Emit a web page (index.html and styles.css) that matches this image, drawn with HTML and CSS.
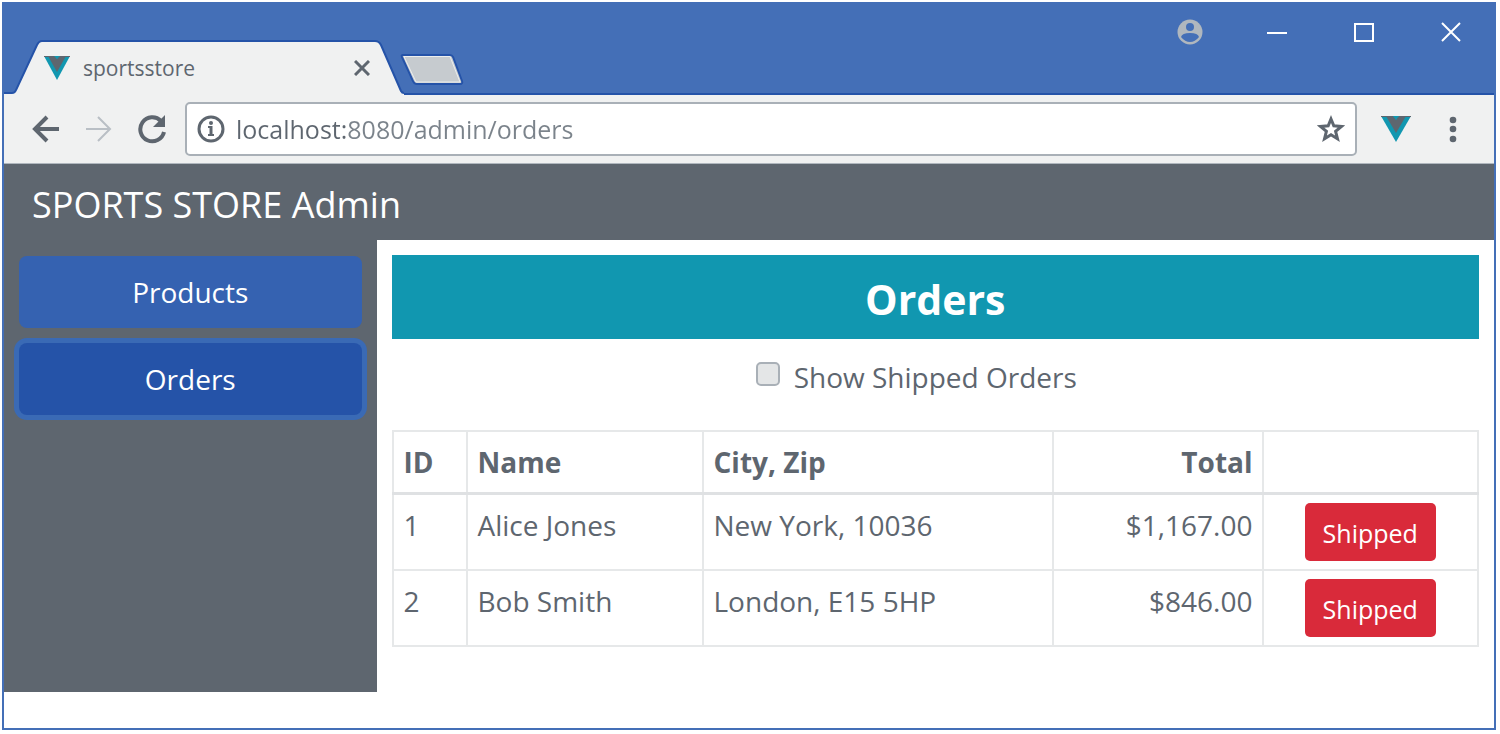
FILE: index.html
```
<!DOCTYPE html>
<html lang="en">
<head>
<meta charset="utf-8">
<title>sportsstore</title>
<link rel="stylesheet" href="styles.css">
</head>
<body>
<div class="window">
  <div class="titlebar">
    <div class="tab">
      <svg class="tab-shape" viewBox="0 0 400 55" preserveAspectRatio="none" aria-hidden="true">
        <path d="M0 55V53H8Q11 53 12 50L33 5Q35 1 38 1H371Q375 1 377 5L397 51Q398 53 400 53V55Z" fill="#f0f1f1"/>
        <path d="M0 53H8Q11 53 12 50L33 5Q35 1 38 1H371Q375 1 377 5L397 51Q398 53 400 53" fill="none" stroke="#2553a8" stroke-width="2"/>
      </svg>
      <svg class="favicon" viewBox="0 0 26 24" aria-hidden="true">
        <path d="M0 0H26L13 24Z" fill="#1197b0"/>
        <path d="M4 0H10L13 4L16 0H22L13 16Z" fill="#5e666f"/>
        <path d="M0 0.500H10L13 4L16 0.500H26" fill="none" stroke="#5e666f"/>
      </svg>
      <span class="tab-title">sportsstore</span>
      <button class="icon-button tab-close" aria-label="Close tab">
        <svg width="16" height="16" viewBox="0 0 16 16"><path d="M1 1L15 15M15 1L1 15" stroke="#5e666f" stroke-width="3"/></svg>
      </button>
    </div>
    <button class="icon-button new-tab" aria-label="New tab">
      <svg width="64" height="34" viewBox="0 0 64 34"><path d="M3 2H50Q52 2 53 4L62 28Q63 31 60 31H17Q14 31 13 28L2 4Q1 2 3 2Z" fill="#c6cbcf" stroke="#2553a8" stroke-width="2"/><path d="M4 3.500H50L60 29H16Z" fill="none" stroke="#eceeee" stroke-width="1"/></svg>
    </button>
    <div class="window-controls">
      <button class="icon-button" aria-label="Profile">
        <svg width="26" height="26" viewBox="0 0 26 26"><circle cx="13" cy="13" r="12.500" fill="#b0b7be"/><circle cx="13" cy="8" r="4" fill="#446fb7"/><path d="M4 18Q5 14 13 14T22 18Q18 23 13 23T4 18Z" fill="#446fb7"/></svg>
      </button>
      <button class="icon-button" aria-label="Minimize">
        <svg width="26" height="26" viewBox="0 0 26 26"><path d="M3 14H23" stroke="#fff" stroke-width="2"/></svg>
      </button>
      <button class="icon-button" aria-label="Maximize">
        <svg width="26" height="26" viewBox="0 0 26 26"><rect x="4" y="5" width="18" height="17" fill="none" stroke="#fff" stroke-width="2"/></svg>
      </button>
      <button class="icon-button" aria-label="Close window">
        <svg width="26" height="26" viewBox="0 0 26 26"><path d="M4 4L22 22M22 4L4 22" stroke="#fff" stroke-width="2"/></svg>
      </button>
    </div>
  </div>

  <div class="toolbar">
    <div class="nav-buttons">
      <button class="icon-button" aria-label="Back">
        <svg width="30" height="30" viewBox="0 0 30 30"><path d="M28 15H4M16 3L4 15L16 27" fill="none" stroke="#5e666f" stroke-width="4"/></svg>
      </button>
      <button class="icon-button" aria-label="Forward">
        <svg width="30" height="30" viewBox="0 0 30 30"><path d="M2 15H26M14 3L26 15L14 27" fill="none" stroke="#b9bfc5" stroke-width="2"/></svg>
      </button>
      <button class="icon-button" aria-label="Reload">
        <svg width="30" height="30" viewBox="0 0 30 30"><path d="M24 7A12 12 0 1 0 27 18" fill="none" stroke="#5e666f" stroke-width="4"/><path d="M28 1V13H16Z" fill="#5e666f"/></svg>
      </button>
    </div>
    <div class="omnibox">
      <svg width="28" height="28" viewBox="0 0 28 28" aria-hidden="true"><circle cx="14" cy="14" r="12" fill="none" stroke="#5e666f" stroke-width="3"/><path d="M11 12H14V20M11 20H17" fill="none" stroke="#5e666f" stroke-width="2"/><path d="M14 11V21" stroke="#5e666f" stroke-width="3"/><circle cx="14" cy="8" r="2" fill="#5e666f"/></svg>
      <input class="address" type="text" aria-label="Address" value="localhost:8080/admin/orders">
      <button class="icon-button" aria-label="Bookmark">
        <svg width="28" height="28" viewBox="0 0 28 28"><path d="M14 4L16.800 10.800L24.500 11.400L18.600 16.300L20.500 23.800L14 19.800L7.500 23.800L9.400 16.300L3.500 11.400L11.200 10.800Z" fill="none" stroke="#5e666f" stroke-width="3"/></svg>
      </button>
    </div>
    <button class="icon-button" aria-label="Vue devtools">
      <svg width="30" height="26" viewBox="0 0 30 26"><path d="M0 0H30L15 26Z" fill="#1197b0"/><path d="M5 0H11L15 5L19 0H25L15 17Z" fill="#5e666f"/><path d="M0 0.500H12L15 5L18 0.500H30" fill="none" stroke="#5e666f"/></svg>
    </button>
    <button class="icon-button menu" aria-label="Menu">
      <svg width="8" height="28" viewBox="0 0 8 28"><g fill="#5e666f"><circle cx="4" cy="5" r="3.300"/><circle cx="4" cy="14" r="3.300"/><circle cx="4" cy="24" r="3.300"/></g></svg>
    </button>
  </div>

  <header class="brand">SPORTS STORE Admin</header>
  <div class="layout">
    <nav class="sidebar">
      <a class="nav-link" href="#products">Products</a>
      <a class="nav-link nav-link-active" href="#orders" aria-current="page">Orders</a>
    </nav>
    <main class="content">
      <h1 class="page-title">Orders</h1>
      <div class="filter">
        <input class="check" type="checkbox" id="show-shipped">
        <label for="show-shipped">Show Shipped Orders</label>
      </div>
      <table class="orders">
        <colgroup><col class="col-id"><col class="col-name"><col class="col-city"><col class="col-total"><col></colgroup>
        <thead>
          <tr><th>ID</th><th>Name</th><th>City, Zip</th><th class="number">Total</th><th></th></tr>
        </thead>
        <tbody>
          <tr><td>1</td><td>Alice Jones</td><td>New York, 10036</td><td class="number">$1,167.00</td><td class="action"><button class="ship">Shipped</button></td></tr>
          <tr><td>2</td><td>Bob Smith</td><td>London, E15 5HP</td><td class="number">$846.00</td><td class="action"><button class="ship">Shipped</button></td></tr>
        </tbody>
      </table>
    </main>
  </div>
</div>
</body>
</html>
```
FILE: styles.css
```
* {
  box-sizing: border-box;
}

body {
  margin: 0;
  min-height: 100vh;
  padding: 2px 4px 4px 2px;
  display: flex;
  background: #fff;
  color: #5e666f;
  font: 28px/40px "Open Sans", "Noto Sans", sans-serif;
}

.window {
  flex: 1;
  border: 2px solid #446fb7;
  border-top: 0;
}

.icon-button {
  display: flex;
  padding: 0;
  border: 0;
  background: none;
}

.titlebar {
  display: flex;
  align-items: flex-end;
  height: 93px;
  background: linear-gradient(#2553a8, #2553a8) bottom / 100% 2px no-repeat #446fb7;
}

.tab {
  position: relative;
  display: flex;
  align-items: center;
  width: 400px;
  height: 55px;
  padding: 0 34px 0 40px;
  font-size: 21px;
}

.tab-shape {
  position: absolute;
  inset: 0;
  width: 100%;
  height: 100%;
}

.favicon {
  position: relative;
  width: 26px;
  height: 24px;
}

.tab-title {
  position: relative;
  flex: 1;
  padding-left: 13px;
}

.tab-close {
  position: relative;
}

.new-tab {
  margin: 0 0 8px -4px;
}

.window-controls {
  display: flex;
  align-self: flex-start;
  gap: 61px;
  margin: 17px 30px 0 auto;
}

.toolbar {
  display: flex;
  align-items: center;
  gap: 24px;
  height: 69px;
  padding: 0 37px 0 27px;
  border-bottom: 1px solid #b0b7be;
  background: #f0f1f1;
}

.nav-buttons {
  display: flex;
  gap: 23px;
  margin-right: -6px;
}

.omnibox {
  flex: 1;
  display: flex;
  align-items: center;
  gap: 11px;
  height: 54px;
  padding: 0 10px;
  border: 2px solid #a9b0b7;
  border-radius: 5px;
  background: #fff;
}

.address {
  flex: 1;
  min-width: 0;
  padding: 0;
  border: 0;
  background: linear-gradient(90deg, #5e666f 111px, #7b838b 111px);
  background-clip: text;
  color: transparent;
  font: inherit;
  font-size: 25px;
}

.menu {
  margin-left: 14px;
}

.brand {
  padding: 21px 28px 15px;
  background: #5e666f;
  color: #fff;
  font-size: 36px;
}

.layout {
  display: flex;
  min-height: 452px;
}

.sidebar {
  display: flex;
  flex-direction: column;
  gap: 15px;
  flex: 0 0 25%;
  padding: 16px 15px;
  background: #5e666f;
}

.nav-link {
  padding: 16px;
  border-radius: 8px;
  background: #3562b1;
  color: #fff;
  text-align: center;
  text-decoration: none;
}

.nav-link-active {
  background: #2553a8;
  box-shadow: 0 0 0 5px #3a6ab5;
}

.content {
  flex: 1;
  padding: 15px;
}

.page-title {
  margin: 0;
  padding: 24px 0 20px;
  background: #1197b0;
  color: #fff;
  font-size: 41px;
  line-height: 40px;
  text-align: center;
}

.filter {
  display: flex;
  justify-content: center;
  align-items: center;
  gap: 14px;
  padding: 18px 38px 33px 0;
}

.check {
  appearance: none;
  width: 24px;
  height: 24px;
  margin: 0 0 6px;
  border: 2px solid #a9b0b7;
  border-radius: 5px;
  background: #e4e6e7;
}

.orders {
  width: 100%;
  border-collapse: collapse;
  table-layout: fixed;
}

.orders th,
.orders td {
  padding: 10px;
  border: 2px solid #e6e8e9;
  text-align: left;
  vertical-align: top;
}

.orders th {
  border-bottom: 3px solid #dfe1e3;
}

.orders .number {
  padding-right: 9px;
  text-align: right;
}

.orders .action {
  padding: 8px;
  text-align: center;
}

.ship {
  display: block;
  margin: 0 auto;
  padding: 10px 18px 8px;
  border: 0;
  border-radius: 5px;
  background: #d92a3a;
  color: #fff;
  font: inherit;
  font-size: 25px;
}

.col-id {
  width: 74px;
}

.col-name {
  width: 236px;
}

.col-city {
  width: 350px;
}

.col-total {
  width: 210px;
}
```
